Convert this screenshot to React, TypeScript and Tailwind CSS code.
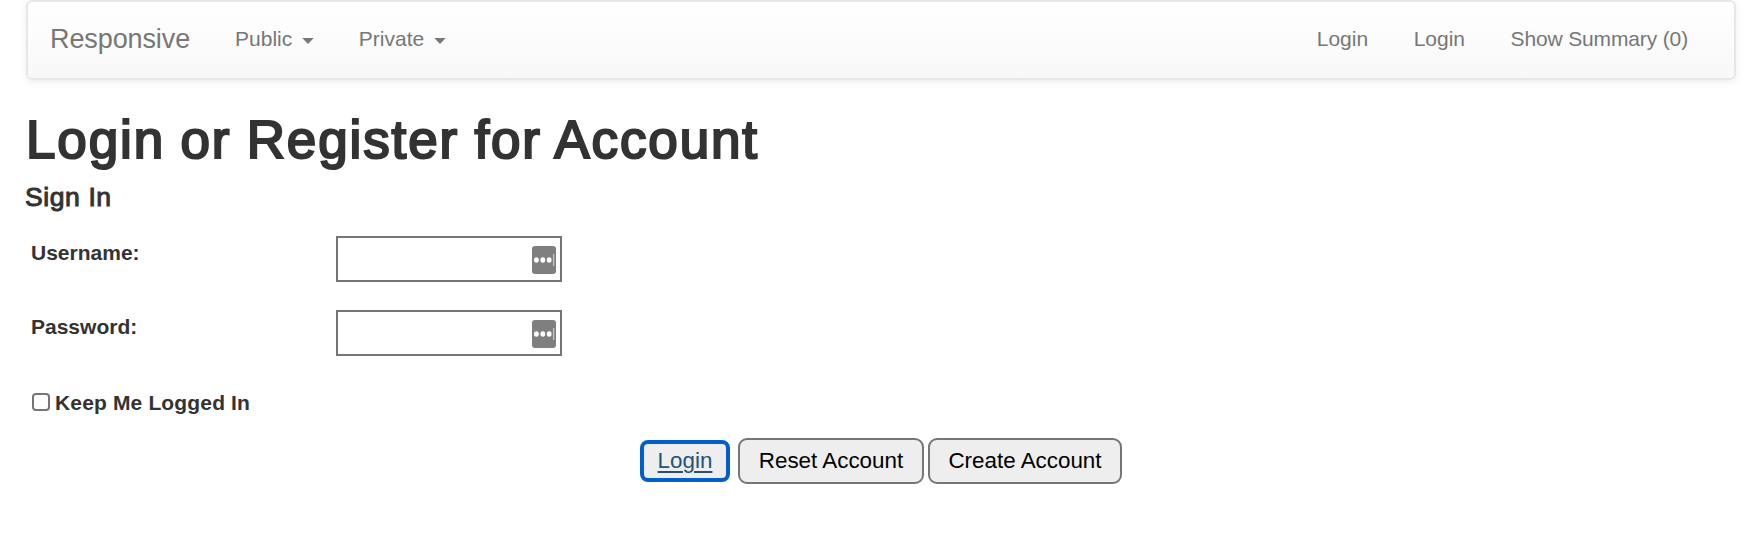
import type { ReactNode } from "react";

function Caret() {
  return (
    <svg width="12" height="6" viewBox="0 0 12 6" className="mt-[4px] ml-[9.5px] shrink-0">
      <path d="M0.3 0h11.4L6 6z" fill="#777" />
    </svg>
  );
}

function NavLink({ children }: { children: ReactNode }) {
  return (
    <a href="#" className="flex items-center whitespace-nowrap">
      {children}
    </a>
  );
}

function PasswordManagerIcon() {
  return (
    <svg width="24" height="28" viewBox="0 0 24 28" className="pointer-events-none absolute top-[10px] right-[6px]">
      <rect width="24" height="28" rx="3" fill="#7f7f7f" />
      <ellipse cx="4.4" cy="14" rx="2.4" ry="2.8" fill="#fff" />
      <ellipse cx="10.8" cy="14" rx="2.4" ry="2.8" fill="#fff" />
      <ellipse cx="17.2" cy="14" rx="2.4" ry="2.8" fill="#fff" />
      <path d="M21.7 8v12" stroke="#d0d0d0" strokeWidth="1.1" />
    </svg>
  );
}

function Field({ id, label, type }: { id: string; label: string; type: string }) {
  return (
    <div className="flex h-[74px] items-start pl-[5px]">
      <label htmlFor={id} className="w-[305px] pt-[2px] text-[21px] leading-[30px] font-bold">
        {label}
      </label>
      <div className="relative">
        <input
          id={id}
          type={type}
          className="block h-[46px] w-[226px] border-2 border-[#767676] bg-white px-1 outline-none"
        />
        <PasswordManagerIcon />
      </div>
    </div>
  );
}

export default function App() {
  return (
    <div className="h-[540px] overflow-hidden bg-white px-[26px] font-['Liberation_Sans',Arial,sans-serif] text-[#333]">
      <nav className="flex h-20 items-center justify-between rounded-[6px] border-2 border-[#e7e7e7] bg-linear-to-b from-white to-[#f8f8f8] pr-[46px] pb-[2px] pl-[22px] text-[21px] text-[#777] shadow-[0_1.5px_7.5px_rgba(0,0,0,0.075)]">
        <div className="flex items-center">
          <a href="#" className="mr-[45px] text-[27px] tracking-[-0.1px]">
            Responsive
          </a>
          <div className="flex gap-[45px]">
            <NavLink>
              Public
              <Caret />
            </NavLink>
            <NavLink>
              Private
              <Caret />
            </NavLink>
          </div>
        </div>
        <div className="flex gap-[45.5px]">
          <NavLink>Login</NavLink>
          <NavLink>Login</NavLink>
          <a href="#" className="tracking-[-0.14px] whitespace-nowrap">
            Show Summary (0)
          </a>
        </div>
      </nav>

      <h1 className="mt-[30px] text-[53px] leading-[60px] font-normal tracking-[1.87px] [word-spacing:-1.2px] [-webkit-text-stroke:2.2px_#333]">
        Login or Register for Account
      </h1>
      <h2 className="mt-[12px] -ml-px text-[26.5px] leading-[30px] font-normal tracking-[0.6px] [-webkit-text-stroke:1px_#333]">
        Sign In
      </h2>

      <form className="mt-[24px]" onSubmit={(e) => e.preventDefault()}>
        <Field id="username" label="Username:" type="text" />
        <Field id="password" label="Password:" type="password" />

        <label className="mt-[3px] flex h-[30px] items-center pl-[6px] text-[21px] leading-[30px] font-bold tracking-[0.15px]">
          <input
            type="checkbox"
            className="mr-[5px] size-[18px] appearance-none rounded-[4px] border-2 border-[#767676] bg-white"
          />
          <span className="pt-px">Keep Me Logged In</span>
        </label>

        <div className="mt-[21px] flex items-center justify-center text-[22.4px] leading-[30px] text-black">
          <button
            type="button"
            className="mr-[8px] h-[42px] w-[90px] rounded-[8px] border-4 border-[#005fcc] bg-[#eee] text-[#23527c] underline decoration-[1.5px] underline-offset-[3px]"
          >
            Login
          </button>
          <button type="button" className="mr-[4px] h-[46px] w-[186px] rounded-[9px] border-2 border-[#767676] bg-[#eee]">
            Reset Account
          </button>
          <button type="button" className="h-[46px] w-[194px] rounded-[9px] border-2 border-[#767676] bg-[#eee]">
            Create Account
          </button>
        </div>
      </form>
    </div>
  );
}
